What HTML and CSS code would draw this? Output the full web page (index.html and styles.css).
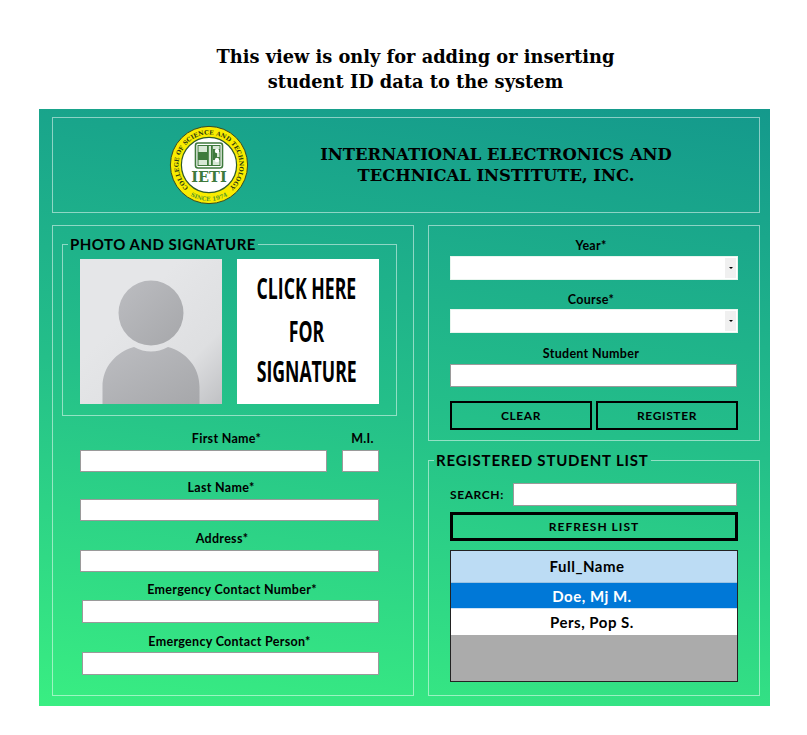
FILE: index.html
```html
<!DOCTYPE html>
<html lang="en">
<head>
<meta charset="utf-8">
<title>Student ID data</title>
<link rel="stylesheet" href="styles.css">
</head>
<body>
<h1 class="notice">This view is only for adding or inserting<br>student ID data to the system</h1>
<main class="app">
  <header class="panel banner">
    <svg class="logo" viewBox="0 0 80 80" width="80" height="80">
      <defs>
        <path id="arcTop" d="M 40 70.500 A 30.500 30.500 0 1 1 40.010 70.500"/>
        <path id="arcBottom" d="M 8.800 58 A 36 36 0 0 0 71.200 58"/>
      </defs>
      <circle cx="40" cy="40" r="38.600" fill="#f9ec00" stroke="#3c4a20" stroke-width="1"/>
      <circle cx="40" cy="40" r="27.600" fill="#fff" stroke="#2f5a2a" stroke-width="1.200"/>
      <text class="logo-ring"><textPath href="#arcTop" startOffset="50%" text-anchor="middle">COLLEGE OF SCIENCE AND TECHNOLOGY</textPath></text>
      <text class="logo-since"><textPath href="#arcBottom" startOffset="50%" text-anchor="middle">SINCE 1974</textPath></text>
      <rect x="26.500" y="18" width="27" height="25" rx="2.500" fill="none" stroke="#3f7a3c" stroke-width="1.600"/>
      <rect x="29" y="20.500" width="22" height="20" fill="#d8e8d6" stroke="#3f7a3c" stroke-width="1"/>
      <path d="M29 27h9v8h-9z M38 20.500h1.800v20H38z M42 20.500h1.800v20H42z" fill="#3f7a3c"/>
      <path d="M44 24h7v3h-3v5h3v3h-7z" fill="#3f7a3c"/>
      <circle cx="48" cy="26" r="2.200" fill="#fff"/><circle cx="48" cy="35" r="2.200" fill="#fff"/>
      <text class="logo-name" x="40" y="56.500" text-anchor="middle">IETI</text>
    </svg>
    <h2 class="school">INTERNATIONAL ELECTRONICS AND<br>TECHNICAL INSTITUTE, INC.</h2>
  </header>

  <section class="panel student">
    <fieldset class="group photos">
      <legend>PHOTO AND SIGNATURE</legend>
      <div class="photo-row">
        <svg class="photo" viewBox="0 0 142 145" width="142" height="145">
          <defs>
            <linearGradient id="bg" x1="0.35" y1="0.35" x2="1" y2="1"><stop offset="0" stop-color="#e5e6e8"/><stop offset="0.6" stop-color="#dedfe1"/><stop offset="1" stop-color="#c0c1c4"/></linearGradient>
            <linearGradient id="fg" x1="0" y1="0" x2="1" y2="1"><stop offset="0" stop-color="#bcbdc1"/><stop offset="1" stop-color="#a6a7aa"/></linearGradient>
          </defs>
          <rect width="142" height="145" fill="url(#bg)"/>
          <circle cx="71" cy="54" r="32.500" fill="url(#fg)"/>
          <path d="M22.500 145V128C22.500 108 36 93 54 88Q71 97 88 88C106 93 119.500 108 119.500 128V145Z" fill="url(#fg)"/>
        </svg>
        <div class="signature">
          <span class="sig-line">CLICK HERE</span>
          <span class="sig-line sig-for">FOR</span>
          <span class="sig-line">SIGNATURE</span>
        </div>
      </div>
    </fieldset>
    <div class="fields">
      <div class="name-row">
        <div class="col-first">
          <label class="label lb-first" for="first">First Name*</label>
          <input class="input" id="first" type="text">
        </div>
        <div class="col-mi">
          <label class="label" for="mi">M.I.</label>
          <input class="input" id="mi" type="text">
        </div>
      </div>
      <label class="label lb-last" for="last">Last Name*</label>
      <input class="input" id="last" type="text">
      <label class="label lb-address" for="address">Address*</label>
      <input class="input" id="address" type="text">
      <label class="label lb-number" for="ecn">Emergency Contact Number*</label>
      <input class="input input-short" id="ecn" type="text">
      <label class="label lb-person" for="ecp">Emergency Contact Person*</label>
      <input class="input input-short" id="ecp" type="text">
    </div>
  </section>

  <div class="side">
    <section class="panel enrol">
      <div class="label lb-year">Year*</div>
      <div class="select"><span class="select-arrow"></span></div>
      <div class="label lb-course">Course*</div>
      <div class="select"><span class="select-arrow"></span></div>
      <label class="label lb-number-s" for="sn">Student Number</label>
      <input class="input input-sn" id="sn" type="text">
      <div class="actions">
        <button class="btn" type="button">CLEAR</button>
        <button class="btn" type="button">REGISTER</button>
      </div>
    </section>
    <fieldset class="group registered">
      <legend>REGISTERED STUDENT LIST</legend>
      <div class="search">
        <label class="search-label" for="q">SEARCH:</label>
        <input class="input input-search" id="q" type="text">
      </div>
      <button class="btn btn-wide" type="button">REFRESH LIST</button>
      <div class="grid">
        <div class="grid-head">Full_Name</div>
        <div class="grid-row selected">Doe, Mj M.</div>
        <div class="grid-row">Pers, Pop S.</div>
        <div class="grid-empty"></div>
      </div>
    </fieldset>
  </div>
</main>
</body>
</html>
```
FILE: styles.css
```css
* { box-sizing: border-box; }
html, body { margin: 0; padding: 0; background: #fff; }
body { width: 807px; height: 735px; overflow: hidden; }

.notice {
  margin: 0;
  padding: 44px 0 0 24px;
  height: 109px;
  text-align: center;
  font: bold 17.800px/25px "DejaVu Serif", serif;
  color: #000;
}

.app {
  width: 731px;
  height: 597px;
  margin-left: 39px;
  padding: 8px 10px 10px 13px;
  display: grid;
  grid-template-columns: 362px 332px;
  grid-template-rows: 96px 471px;
  column-gap: 14px;
  row-gap: 12px;
  background: linear-gradient(188deg, #14998c 0%, #24bf89 50%, #39ee82 100%);
  font-family: "Lato", "DejaVu Sans", sans-serif;
  color: #000;
}

.panel { border: 1px solid rgba(255, 255, 255, 0.5); }

.banner {
  grid-column: 1 / 3;
  display: flex;
  align-items: center;
  padding-left: 116px;
}
.logo { flex: none; margin-top: -1px; }
.school {
  margin: -1px 0 0 70px;
  width: 354px;
  text-align: center;
  font: bold 16.400px/21px "DejaVu Serif", serif;
  white-space: nowrap;
}
.logo-ring { font: bold 6px "DejaVu Serif", serif; fill: #2c3a10; }
.logo-since { font: bold 5.800px "DejaVu Serif", serif; fill: #5a9a2a; }
.logo-name { font: bold 14.500px "DejaVu Serif", serif; fill: #3f7a3c; }

.student { padding: 9px 9px 0; }

.group {
  margin: 0;
  min-width: 0;
  border: 1px solid rgba(255, 255, 255, 0.5);
}
.group legend {
  padding: 0 2px;
  font: bold 15px/18px "Lato", sans-serif;
}
.photos { width: 335px; height: 181px; padding: 6px 0 0 17px; }
.photos legend { margin-left: -12px; letter-spacing: 0.5px; }
.photo-row { display: flex; gap: 15px; }
.photo { display: block; flex: none; }
.signature {
  flex: none;
  width: 142px;
  height: 145px;
  padding: 8px 3px 0 0;
  background: #fff;
  display: flex;
  flex-direction: column;
  align-items: center;
}
.sig-line {
  flex: none;
  height: 42px;
  font: 700 28.500px/42px "Open Sans", sans-serif;
  color: #000;
  white-space: nowrap;
  transform: scaleX(0.62);
}
.sig-for { margin: 1px 0 -2px; }

.fields { padding: 16px 25px 0 18px; }
.name-row { display: flex; gap: 15px; }
.col-first { width: 247px; }
.col-mi { width: 37px; }

.label {
  display: block;
  height: 14px;
  margin-bottom: 4px;
  font-size: 12.500px;
  line-height: 14px;
  font-weight: 700;
  text-align: center;
  letter-spacing: 0.3px;
  white-space: nowrap;
}
.col-mi .label { margin-left: 2px; margin-right: -2px; }
.lb-first { padding-left: 46px; }
.lb-last { margin-top: 9px; padding-right: 17px; }
.lb-address { margin-top: 11px; padding-right: 15px; }
.lb-number { margin-top: 11px; margin-bottom: 3px; padding-left: 5px; }
.lb-person { margin-top: 12px; margin-bottom: 3px; }

.input {
  display: block;
  width: 100%;
  height: 22px;
  padding: 0;
  margin: 0;
  background: #fff;
  border: 1px solid #9a9a9a;
  border-radius: 0;
}
.input-short { width: 297px; margin-left: 2px; height: 23px; }

.side { display: flex; flex-direction: column; gap: 10px; }
.enrol { height: 216px; padding: 13px 21px 0; }
.lb-year { margin-bottom: 3px; padding-right: 6px; }
.lb-course { margin-top: 13px; margin-bottom: 2px; padding-right: 6px; }
.lb-number-s { margin-top: 14px; margin-bottom: 3px; padding-right: 6px; }

.select {
  height: 24px;
  padding: 1px;
  display: flex;
  justify-content: flex-end;
  background: #fff;
  border: 1px solid #e8f5ee;
}
.select-arrow {
  width: 11px;
  background: #f0f0f0;
  display: flex;
  align-items: center;
  justify-content: center;
}
.select-arrow::after {
  content: "";
  border: 2px solid transparent;
  border-top: 2px solid #000;
  border-bottom: 0;
}
.input-sn { height: 23px; width: 287px; }

.actions { display: flex; gap: 4px; margin-top: 14px; }
.btn {
  flex: 1;
  height: 29px;
  padding: 0;
  background: transparent;
  border: 2px solid #000;
  border-radius: 0;
  color: #000;
  font: 700 12px/14px "Lato", sans-serif;
  letter-spacing: 0.6px;
}

.registered { height: 245px; padding: 14px 21px 0; }
.registered legend { margin-left: -16px; letter-spacing: 0.8px; }
.search { display: flex; align-items: center; justify-content: space-between; padding-right: 1px; }
.search-label { font: 700 12px/14px "Lato", sans-serif; letter-spacing: 0.6px; }
.input-search { width: 224px; height: 23px; }
.btn-wide { display: block; width: 100%; border-width: 3px; margin-top: 6px; letter-spacing: 1px; }

.grid {
  margin-top: 9px;
  height: 132px;
  display: flex;
  flex-direction: column;
  background: #ababab;
  border: 1px solid #222;
  text-align: center;
  font: 700 15px/27px "Lato", sans-serif;
  letter-spacing: 0.5px;
}
.grid-head {
  height: 32px;
  line-height: 31px;
  padding-right: 14px;
  background: #bcdcf4;
  border-bottom: 1px solid #9cc3e2;
}
.grid-row { height: 26px; padding-right: 4px; background: #fff; }
.grid-row.selected { background: #0078d7; color: #fff; border-bottom: 1px solid #cfe4f5; }
.grid-empty { flex: 1; }
```
